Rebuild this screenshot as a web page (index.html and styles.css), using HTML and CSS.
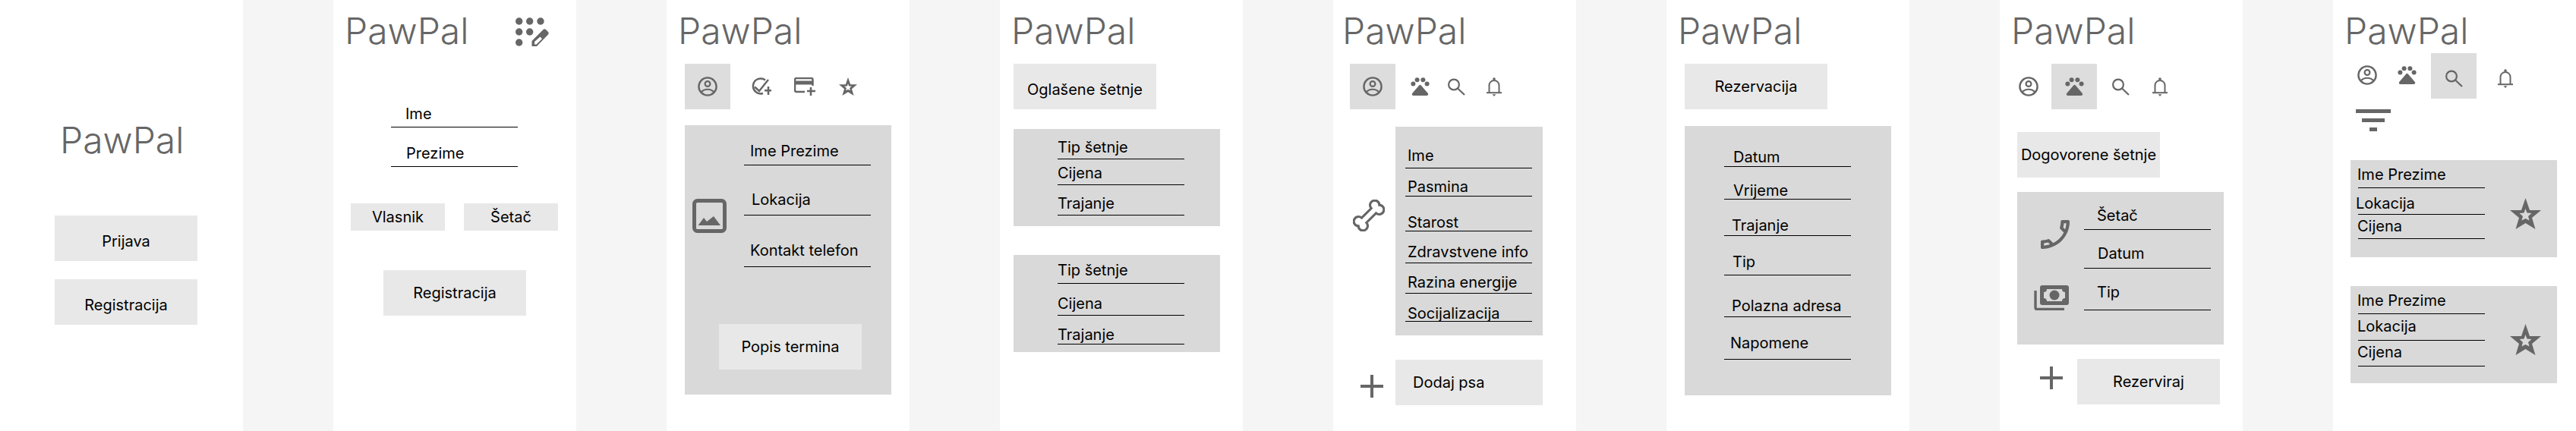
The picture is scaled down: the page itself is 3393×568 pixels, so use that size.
FILE: index.html
```html
<!DOCTYPE html>
<html lang="hr">
<head>
<meta charset="utf-8">
<title>PawPal</title>
<link rel="stylesheet" href="styles.css">
</head>
<body>
<svg class="defs" width="0" height="0" aria-hidden="true">
  <defs>
    <symbol id="i-profile" viewBox="0 0 26 26">
      <circle cx="13" cy="13" r="11.6" fill="none" stroke="currentColor" stroke-width="2.4"/>
      <circle cx="13" cy="9.5" r="3.4" fill="none" stroke="currentColor" stroke-width="2.2"/>
      <path d="M4.500 20.500C9 15.500 17 15.500 21.500 20.500" fill="none" stroke="currentColor" stroke-width="2.2"/>
    </symbol>
    <symbol id="i-paw" viewBox="0 0 25 24">
      <circle cx="3.400" cy="8.400" r="3"/>
      <circle cx="8.600" cy="3.200" r="3"/>
      <circle cx="16.400" cy="3.200" r="3"/>
      <circle cx="21.600" cy="8.400" r="3"/>
      <path d="M12.500 11.500L21.500 22.200H3.500Z" stroke="currentColor" stroke-width="3.400" stroke-linejoin="round"/>
    </symbol>
    <symbol id="i-search" viewBox="0 0 23 23">
      <circle cx="8" cy="8.500" r="6.900" fill="none" stroke="currentColor" stroke-width="2.200"/>
      <path d="M13 13.500L22 22" fill="none" stroke="currentColor" stroke-width="2.200"/>
    </symbol>
    <symbol id="i-bell" viewBox="0 0 20 25">
      <circle cx="10" cy="2" r="1.800"/>
      <path d="M3.500 20V10.500a6.500 6.500 0 0 1 13 0V20" fill="none" stroke="currentColor" stroke-width="2"/>
      <path d="M0 20.200H20" fill="none" stroke="currentColor" stroke-width="2"/>
      <path d="M7.500 22.200H12.500L10 25Z"/>
    </symbol>
    <symbol id="i-star" viewBox="0 0 41 41">
      <path fill-rule="evenodd" d="M20.500 0L26 16H41L29 26L33.500 41L20.500 33L7.500 41L12 26L0 16H15ZM20.500 14L18.500 19.500L12.500 20L17 24L15.500 29.500L20.500 27L25.500 29.500L24 24L28.500 20L22.500 19.500Z"/>
    </symbol>
    <symbol id="i-plus" viewBox="0 0 30 30">
      <path d="M13 0H17V13H30V17H17V30H13V17H0V13H13Z"/>
    </symbol>
  </defs>
</svg>

<main class="board">

  <section class="screen s1">
    <h1 class="title">PawPal</h1>
    <div class="btn">Prijava</div>
    <div class="btn">Registracija</div>
  </section>

  <section class="screen s2">
    <header class="head">
      <h1 class="title">PawPal</h1>
      <svg class="icon dial" viewBox="0 0 46 40" width="46" height="40">
        <circle cx="4.700" cy="5" r="4.700"/><circle cx="18.700" cy="5" r="4.700"/><circle cx="33" cy="5" r="4.700"/>
        <circle cx="4.700" cy="19" r="4.700"/><circle cx="18.700" cy="19" r="4.700"/>
        <circle cx="4.700" cy="33" r="4.700"/>
        <path fill-rule="evenodd" d="M21.500 38V31L36 16.500C37.500 15 39 15 40 16L43 19C44 20 44 21.500 42.500 23L28 38ZM25 32V35.500H27.500L35 28L32.500 25.500Z"/>
      </svg>
    </header>
    <div class="fields list-s2">
      <div class="field">Ime</div>
      <div class="field">Prezime</div>
    </div>
    <div class="roles">
      <div class="btn role">Vlasnik</div>
      <div class="btn role">Šetač</div>
    </div>
    <div class="btn submit">Registracija</div>
  </section>

  <section class="screen s3">
    <h1 class="title">PawPal</h1>
    <nav class="tabs">
      <div class="tab on"><svg class="icon" width="26" height="26"><use href="#i-profile"/></svg></div>
      <svg class="icon" viewBox="0 0 28 24" width="28" height="24">
        <path d="M20 3.500A10 10 0 1 0 17 21" fill="none" stroke="currentColor" stroke-width="2.500"/>
        <path d="M6 12.500L12 18L24 3" fill="none" stroke="currentColor" stroke-width="2.500"/>
        <path d="M22.700 12H25.300V16H28V18.600H25.300V23H22.700V18.600H19V16H22.700Z"/>
      </svg>
      <svg class="icon" viewBox="0 0 28 24" width="28" height="24">
        <path d="M24.500 11V3a2 2 0 0 0-2-2H3a2 2 0 0 0-2 2v14a2 2 0 0 0 2 2h11" fill="none" stroke="currentColor" stroke-width="2.500"/>
        <path d="M1 4.500H24.500V9.500H1Z"/>
        <path d="M20.700 13H23.300V16.700H28V19.300H23.300V24H20.700V19.300H17V16.700H20.700Z"/>
      </svg>
      <svg class="icon" width="24" height="24"><use href="#i-star"/></svg>
    </nav>
    <div class="panel panel-tall">
      <div class="profile-row">
        <svg class="icon pic" viewBox="0 0 45 45" width="45" height="45">
          <rect x="2.500" y="2.500" width="40" height="40" rx="4" fill="none" stroke="currentColor" stroke-width="5"/>
          <path d="M7.500 35L15 25L19 30L28 23L37 35Z"/>
        </svg>
        <div class="fields list-s3">
          <div class="field">Ime Prezime</div>
          <div class="field">Lokacija</div>
          <div class="field">Kontakt telefon</div>
        </div>
      </div>
      <div class="btn slots">Popis termina</div>
    </div>
  </section>

  <section class="screen s4">
    <h1 class="title">PawPal</h1>
    <div class="btn lead">Oglašene šetnje</div>
    <div class="panel panel-walk">
      <div class="fields list-s4a">
        <div class="field">Tip šetnje</div>
        <div class="field">Cijena</div>
        <div class="field">Trajanje</div>
      </div>
    </div>
    <div class="panel panel-walk">
      <div class="fields list-s4b">
        <div class="field">Tip šetnje</div>
        <div class="field">Cijena</div>
        <div class="field">Trajanje</div>
      </div>
    </div>
  </section>

  <section class="screen s5">
    <h1 class="title">PawPal</h1>
    <nav class="tabs">
      <div class="tab on"><svg class="icon" width="26" height="26"><use href="#i-profile"/></svg></div>
      <svg class="icon" width="25" height="24"><use href="#i-paw"/></svg>
      <svg class="icon" width="23" height="23"><use href="#i-search"/></svg>
      <svg class="icon" width="20" height="25"><use href="#i-bell"/></svg>
    </nav>
    <div class="dog-row">
      <svg class="icon bone" viewBox="-21 -21 42 42" width="42" height="42">
        <g transform="rotate(-45) scale(1.120)">
          <path d="M-8-4H8A5.500 5.500 0 1 1 17.500 0A5.500 5.500 0 1 1 8 4H-8A5.500 5.500 0 1 1 -17.500 0A5.500 5.500 0 1 1 -8-4Z" fill="none" stroke="currentColor" stroke-width="2.800"/>
        </g>
      </svg>
      <div class="panel panel-dog">
        <div class="fields list-s5">
          <div class="field">Ime</div>
          <div class="field">Pasmina</div>
          <div class="field">Starost</div>
          <div class="field">Zdravstvene info</div>
          <div class="field">Razina energije</div>
          <div class="field">Socijalizacija</div>
        </div>
      </div>
    </div>
    <div class="add-row">
      <svg class="icon plus" width="30" height="30"><use href="#i-plus"/></svg>
      <div class="btn add">Dodaj psa</div>
    </div>
  </section>

  <section class="screen s6">
    <h1 class="title">PawPal</h1>
    <div class="btn lead">Rezervacija</div>
    <div class="panel panel-tall">
      <div class="fields list-s6">
        <div class="field">Datum</div>
        <div class="field">Vrijeme</div>
        <div class="field">Trajanje</div>
        <div class="field">Tip</div>
        <div class="field">Polazna adresa</div>
        <div class="field">Napomene</div>
      </div>
    </div>
  </section>

  <section class="screen s7">
    <h1 class="title">PawPal</h1>
    <nav class="tabs">
      <svg class="icon" width="26" height="26"><use href="#i-profile"/></svg>
      <div class="tab on"><svg class="icon" width="25" height="24"><use href="#i-paw"/></svg></div>
      <svg class="icon" width="23" height="23"><use href="#i-search"/></svg>
      <svg class="icon" width="20" height="25"><use href="#i-bell"/></svg>
    </nav>
    <div class="btn lead">Dogovorene šetnje</div>
    <div class="panel panel-booked">
      <div class="booked-icons">
        <svg class="icon phone" viewBox="3 3 18 18" width="38" height="38">
          <path transform="translate(24 0) scale(-1 1)" d="M6.540 5c.06.890.210 1.760.450 2.590l-1.200 1.200c-.410-1.200-.670-2.470-.760-3.790h1.510m9.860 12.020c.850.240 1.720.390 2.600.450v1.490c-1.320-.090-2.590-.350-3.800-.750l1.200-1.190M7.500 3H4c-.550 0-1 .450-1 1 0 9.390 7.610 17 17 17 .550 0 1-.450 1-1v-3.490c0-.550-.450-1-1-1-1.240 0-2.450-.200-3.570-.570-.100-.040-.210-.050-.310-.050-.260 0-.510.100-.710.290l-2.200 2.200c-2.830-1.450-5.150-3.760-6.590-6.590l2.200-2.200c.280-.280.360-.670.250-1.020C8.700 6.450 8.500 5.250 8.500 4c0-.550-.450-1-1-1z"/>
        </svg>
        <svg class="icon money" viewBox="0 0 46 33" width="46" height="33">
          <path d="M2 7V29.500A2 2 0 0 0 4 31.500H40" fill="none" stroke="currentColor" stroke-width="3.400"/>
          <path fill-rule="evenodd" d="M11 0H43A3 3 0 0 1 46 3V23A3 3 0 0 1 43 26H11A3 3 0 0 1 8 23V3A3 3 0 0 1 11 0ZM17 5A4 4 0 0 1 13 9V17A4 4 0 0 1 17 21H37A4 4 0 0 1 41 17V9A4 4 0 0 1 37 5Z"/>
          <circle cx="27" cy="13" r="6.500"/>
        </svg>
      </div>
      <div class="fields list-s7">
        <div class="field">Šetač</div>
        <div class="field">Datum</div>
        <div class="field">Tip</div>
      </div>
    </div>
    <div class="add-row">
      <svg class="icon plus" width="30" height="30"><use href="#i-plus"/></svg>
      <div class="btn reserve">Rezerviraj</div>
    </div>
  </section>

  <section class="screen s8">
    <h1 class="title">PawPal</h1>
    <nav class="tabs">
      <svg class="icon" width="26" height="26"><use href="#i-profile"/></svg>
      <svg class="icon" width="25" height="24"><use href="#i-paw"/></svg>
      <div class="tab on"><svg class="icon" width="23" height="23"><use href="#i-search"/></svg></div>
      <svg class="icon" width="20" height="25"><use href="#i-bell"/></svg>
    </nav>
    <div class="filter"><span></span><span></span><span></span></div>
    <div class="panel card">
      <div class="fields list-s8a">
        <div class="field">Ime Prezime</div>
        <div class="field">Lokacija</div>
        <div class="field">Cijena</div>
      </div>
      <svg class="icon fav" width="41" height="41"><use href="#i-star"/></svg>
    </div>
    <div class="panel card">
      <div class="fields list-s8b">
        <div class="field">Ime Prezime</div>
        <div class="field">Lokacija</div>
        <div class="field">Cijena</div>
      </div>
      <svg class="icon fav" width="41" height="41"><use href="#i-star"/></svg>
    </div>
  </section>

</main>
</body>
</html>
```

FILE: styles.css
```css
* { box-sizing: border-box; }

html, body {
  margin: 0;
  height: 568px;
  overflow: hidden;
  background: #f5f5f5;
}

.defs { position: absolute; }

.board {
  display: flex;
  gap: 119px;
  font-family: "Inter", "Liberation Sans", sans-serif;
  font-size: 20px;
  line-height: 20px;
  color: #000;
}

.screen {
  flex: none;
  width: 320px;
  height: 568px;
  background: #fff;
  display: flex;
  flex-direction: column;
  align-items: flex-start;
}

.title {
  margin: 12px 0 0 15px;
  font-size: 48px;
  line-height: 58px;
  font-weight: 300;
  color: #666;
}

.icon {
  display: block;
  flex: none;
  color: #666;
  fill: currentColor;
}

.btn {
  flex: none;
  width: 188px;
  height: 60px;
  display: flex;
  align-items: center;
  justify-content: center;
  background: #e8e8e8;
}

.panel {
  flex: none;
  width: 272px;
  background: #d9d9d9;
}

.fields {
  flex: none;
  width: 167px;
  display: flex;
  flex-direction: column;
}

.field {
  border-bottom: 1px solid #000;
  white-space: nowrap;
}

.tabs {
  display: flex;
  align-items: center;
  height: 60px;
  margin-top: 14px;
}

.tab.on {
  width: 60px;
  height: 60px;
  background: #ddd;
  display: flex;
  align-items: center;
  justify-content: center;
}

.lead { margin-top: 14px; }

/* Screen 1: landing */
.s1 .title { margin: 156px 0 0 79px; }
.s1 .btn { margin-left: 72px; padding-top: 8px; }
.s1 .btn:nth-of-type(1) { margin-top: 70px; }
.s1 .btn:nth-of-type(2) { margin-top: 24px; }

/* Screen 2: registration */
.head {
  display: flex;
  align-self: stretch;
  justify-content: space-between;
  align-items: flex-start;
}
.dial { margin: 23px 34px 0 0; }
.list-s2 { margin: 70px 0 0 76px; }
.list-s2 .field { padding-bottom: 7px; }
.list-s2 .field:nth-child(1) { padding-left: 19px; }
.list-s2 .field:nth-child(2) { margin-top: 24px; padding-left: 20px; }
.roles { display: flex; gap: 25px; margin: 48px 0 0 23px; }
.role { width: 124px; height: 36px; }
.submit { margin: 52px 0 0 66px; }

/* Screen 3: walker profile */
.s3 .tabs { margin-left: 24px; }
.s3 .tabs > :nth-child(2) { margin-left: 26px; }
.s3 .tabs > :nth-child(3) { margin-left: 30px; }
.s3 .tabs > :nth-child(4) { margin-left: 31px; }
.s3 .panel { margin: 21px 0 0 24px; }
.panel-tall { height: 355px; display: flow-root; }
.profile-row { display: flex; align-items: flex-start; }
.pic { margin: 97px 23px 0 10px; }
.list-s3 .field:nth-child(1) { margin-top: 24px; padding: 0 0 8px 8px; }
.list-s3 .field:nth-child(2) { margin-top: 35px; padding: 0 0 10px 10px; }
.list-s3 .field:nth-child(3) { margin-top: 36px; padding: 0 0 11px 8px; }
.slots { margin: 75px 0 0 45px; }

/* Screen 4: advertised walks */
.s4 .lead { margin-left: 18px; padding-top: 8px; }
.s4 .panel { margin: 26px 0 0 18px; }
.s4 .panel + .panel { margin-top: 38px; }
.panel-walk { height: 128px; display: flow-root; }
.panel-walk .fields { margin-left: 58px; }
.list-s4a .field { padding-bottom: 5px; }
.list-s4a .field:nth-child(1) { margin-top: 14px; }
.list-s4a .field:nth-child(2) { margin-top: 8px; }
.list-s4a .field:nth-child(3) { margin-top: 14px; }
.list-s4b .field:nth-child(1) { margin-top: 10px; padding-bottom: 7px; }
.list-s4b .field:nth-child(2) { margin-top: 16px; padding-bottom: 5px; }
.list-s4b .field:nth-child(3) { margin-top: 15px; padding-bottom: 2px; }

/* Screen 5: dogs */
.s5 .title { margin-left: 12px; }
.s5 .tabs { margin-left: 22px; }
.s5 .tabs > :nth-child(2) { margin-left: 20px; }
.s5 .tabs > :nth-child(3) { margin-left: 24px; }
.s5 .tabs > :nth-child(4) { margin-left: 28px; }
.dog-row { display: flex; align-items: flex-start; margin: 23px 0 0 26px; }
.bone { margin: 96px 14px 0 0; }
.panel-dog { width: 194px; height: 275px; display: flow-root; }
.panel-dog .fields { margin-left: 13px; }
.list-s5 .field { padding-left: 3px; }
.list-s5 .field:nth-child(1) { margin-top: 28px; padding-bottom: 6px; }
.list-s5 .field:nth-child(2) { margin-top: 14px; padding-bottom: 2px; }
.list-s5 .field:nth-child(3) { margin-top: 24px; padding-bottom: 1px; }
.list-s5 .field:nth-child(4) { margin-top: 17px; padding-bottom: 4px; }
.list-s5 .field:nth-child(5) { margin-top: 15px; padding-bottom: 4px; }
.list-s5 .field:nth-child(6) { margin-top: 16px; padding-bottom: 0; }
.add-row { display: flex; align-items: flex-start; }
.s5 .add-row { margin: 32px 0 0 36px; }
.s5 .plus { margin: 20px 16px 0 0; }
.add { width: 194px; justify-content: flex-start; padding-left: 23px; }

/* Screen 6: reservation */
.s6 .lead { margin-left: 24px; }
.s6 .panel { margin: 22px 0 0 24px; }
.list-s6 { margin-left: 52px; }
.list-s6 .field:nth-child(1) { margin-top: 31px; padding: 0 0 2px 12px; }
.list-s6 .field:nth-child(2) { margin-top: 21px; padding: 0 0 1px 12px; }
.list-s6 .field:nth-child(3) { margin-top: 24px; padding: 0 0 3px 10px; }
.list-s6 .field:nth-child(4) { margin-top: 24px; padding: 0 0 7px 11px; }
.list-s6 .field:nth-child(5) { margin-top: 30px; padding: 0 0 4px 10px; }
.list-s6 .field:nth-child(6) { margin-top: 24px; padding: 0 0 11px 8px; }

/* Screen 7: agreed walks */
.s7 .tabs { margin-left: 25px; }
.s7 .tabs > :nth-child(2) { margin-left: 17px; }
.s7 .tabs > :nth-child(3) { margin-left: 20px; }
.s7 .tabs > :nth-child(4) { margin-left: 30px; }
.s7 .lead { margin: 30px 0 0 23px; }
.panel-booked {
  height: 201px;
  margin: 19px 0 0 23px;
  display: flex;
  align-items: flex-start;
}
.booked-icons { flex: none; width: 88px; }
.phone { margin: 37px 0 0 31px; }
.money { margin: 48px 0 0 22px; }
.list-s7 .field:nth-child(1) { margin-top: 21px; padding: 0 0 8px 17px; }
.list-s7 .field:nth-child(2) { margin-top: 21px; padding: 0 0 9px 18px; }
.list-s7 .field:nth-child(3) { margin-top: 21px; padding: 0 0 13px 17px; }
.s7 .add-row { margin: 19px 0 0 53px; }
.s7 .plus { margin: 10px 19px 0 0; }

/* Screen 8: search */
.s8 .tabs { margin: 0 0 0 32px; align-items: flex-start; }
.s8 .tabs > :nth-child(1) { margin-top: 16px; }
.s8 .tabs > :nth-child(2) { margin: 17px 0 0 27px; }
.s8 .tabs > :nth-child(3) { margin-left: 19px; padding-top: 6px; }
.s8 .tabs > :nth-child(4) { margin: 21px 0 0 28px; }
.filter {
  display: flex;
  flex-direction: column;
  align-items: center;
  gap: 7px;
  width: 46px;
  margin: 14px 0 0 30px;
}
.filter span { display: block; height: 5px; background: #666; }
.filter span:nth-child(1) { width: 46px; }
.filter span:nth-child(2) { width: 30px; }
.filter span:nth-child(3) { width: 10px; }
.card {
  height: 128px;
  margin: 38px 0 0 23px;
  display: flex;
  align-items: flex-start;
}
.card .fields { margin-left: 10px; }
.card .field { text-indent: -1px; }
.fav { margin: 50px 0 0 33px; }
.list-s8a .field:nth-child(1) { margin-top: 9px; padding-bottom: 7px; }
.list-s8a .field:nth-child(2) { margin-top: 10px; padding-bottom: 4px; text-indent: -3px; }
.list-s8a .field:nth-child(3) { margin-top: 5px; padding-bottom: 6px; }
.list-s8b .field:nth-child(1) { margin-top: 9px; padding-bottom: 7px; }
.list-s8b .field:nth-child(2) { margin-top: 6px; padding-bottom: 8px; }
.list-s8b .field:nth-child(3) { margin-top: 5px; padding-bottom: 8px; }
```
